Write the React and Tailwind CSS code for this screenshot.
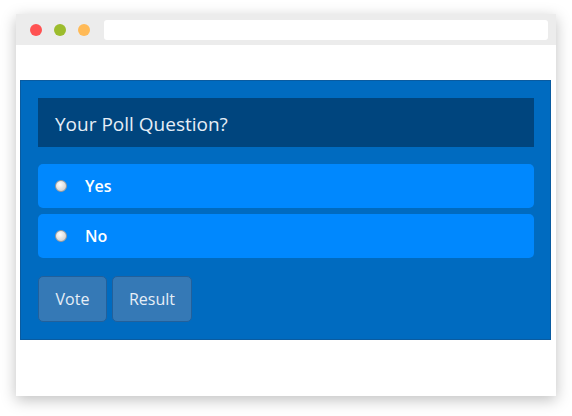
import React from "react";

const options = ["Yes", "No"];

const App = () => {
  return (
    <div className="w-[572px] h-[416px] bg-white pt-[14px] pl-4" style={{ fontFamily: '"Open Sans", sans-serif' }}>
      <div className="w-[540px] h-[382px] bg-white shadow-[0_4px_14px_rgba(0,0,0,0.25)]">
        <div className="h-[31px] bg-[#ececec] flex items-center pl-[14px] pr-2">
          <span className="w-3 h-3 rounded-full bg-[#ff5252]" />
          <span className="w-3 h-3 rounded-full bg-[#9cbc2d] ml-3" />
          <span className="w-3 h-3 rounded-full bg-[#ffba57] ml-3" />
          <div className="ml-[14px] flex-1 h-5 bg-white rounded-[3px]" />
        </div>
        <div className="pt-[35px] px-1">
          <div className="w-[531px] h-[260px] bg-[#006bc0] border border-[#0a5ba0] pl-[17px] pr-4 pt-[17px]">
            <div className="h-[49px] bg-[#00457e] flex items-center pl-[17px] pt-[3px] text-[19px] text-[#e6eef6]">
              Your Poll Question?
            </div>
            <div className="mt-[17px] flex flex-col gap-[6px]">
              {options.map((opt) => (
                <label key={opt} className="h-[44px] bg-[#0088fe] rounded-[5px] flex items-center pl-[17px] text-white font-semibold text-[16px]">
                  <span className="w-3 h-3 rounded-full border border-[#9a9a9a] bg-[radial-gradient(circle_at_40%_35%,#ffffff,#c4c4c4)]" />
                  <span className="ml-[18px]">{opt}</span>
                </label>
              ))}
            </div>
            <div className="mt-[18px] flex gap-[5px]">
              <button className="w-[69px] h-[46px] rounded-[5px] bg-[#3579b6] border border-[#22609b] text-[#e6eef6] text-[16px]">
                Vote
              </button>
              <button className="w-[80px] h-[46px] rounded-[5px] bg-[#3579b6] border border-[#22609b] text-[#e6eef6] text-[16px]">
                Result
              </button>
            </div>
          </div>
        </div>
      </div>
    </div>
  );
};

export default App;
